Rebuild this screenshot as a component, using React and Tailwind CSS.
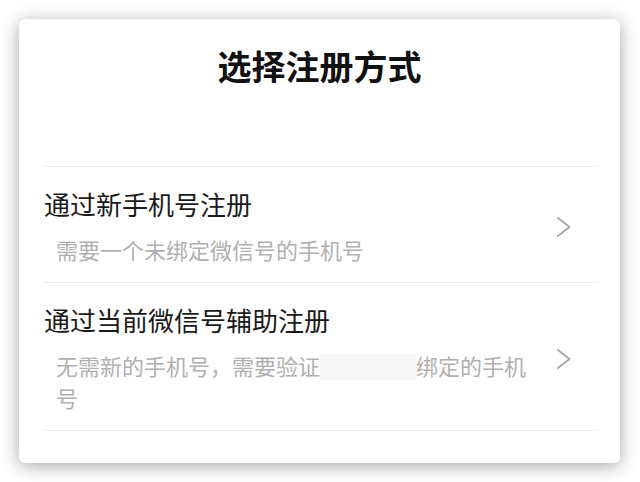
import React from "react";

function Chevron() {
  return (
    <svg width="14" height="20" viewBox="0 0 14 20" className="shrink-0" fill="none">
      <path d="M1 1 L12.5 10 L1 19" stroke="#a6a6a6" strokeWidth="1.8" strokeLinecap="round" strokeLinejoin="round" />
    </svg>
  );
}

export default function App() {
  const font = { fontFamily: '"Noto Sans CJK SC", "Noto Sans", sans-serif' };
  return (
    <div className="w-[640px] h-[482px] bg-white pt-[19px] pl-[19px]" style={font}>
      <div className="w-[601px] h-[444px] bg-white rounded-md shadow-[0_3px_18px_rgba(0,0,0,0.35)] flex flex-col">
        <div className="pt-[27px] h-[147px] text-center text-[34px] leading-[40px] font-bold text-[#111111]">
          选择注册方式
        </div>
        <div className="ml-[25px] mr-[21px] border-t border-[#ececec]">
          <div className="flex items-center pr-[28px] pt-[22px] pb-[17px] border-b border-[#ececec]">
            <div className="flex-1 min-w-0 pr-[18px]">
              <div className="text-[26px] leading-[30px] text-[#1a1a1a]">通过新手机号注册</div>
              <div className="mt-[14px] pl-[12px] text-[22px] leading-[32px] text-[#b0b0b0]">
                需要一个未绑定微信号的手机号
              </div>
            </div>
            <Chevron />
          </div>
          <div className="flex items-center pr-[28px] pt-[22px] pb-[17px] border-b border-[#ececec]">
            <div className="flex-1 min-w-0 pr-[18px]">
              <div className="text-[26px] leading-[30px] text-[#1a1a1a]">通过当前微信号辅助注册</div>
              <div className="mt-[14px] pl-[12px] text-[22px] leading-[32px] text-[#b0b0b0]">
                <div className="flex items-center whitespace-nowrap">
                  <span>无需新的手机号，需要验证</span>
                  <span className="w-[96px] h-[26px] bg-[#f6f6f6] mt-[3px]"></span>
                  <span>绑定的手机</span>
                </div>
                <div>号</div>
              </div>
            </div>
            <Chevron />
          </div>
        </div>
      </div>
    </div>
  );
}
